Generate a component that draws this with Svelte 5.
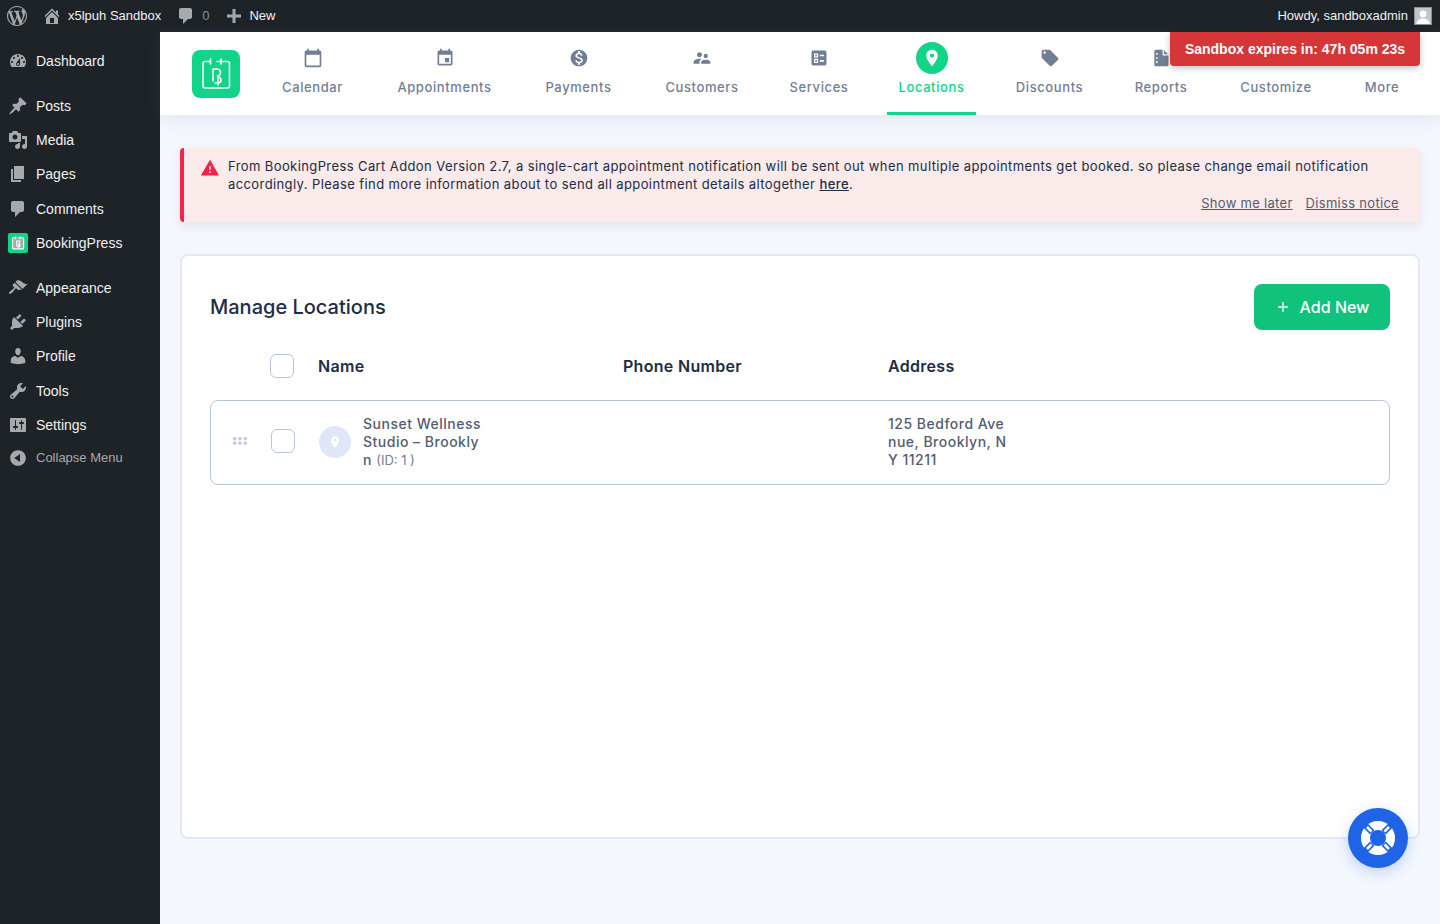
<script>
	const sidebar = [
		{ label: 'Dashboard', d: 'M3.76 16h12.48c1.1-1.37 1.76-3.11 1.76-5 0-4.42-3.58-8-8-8s-8 3.58-8 8c0 1.89.66 3.63 1.76 5zM10 4c.55 0 1 .45 1 1s-.45 1-1 1-1-.45-1-1 .45-1 1-1zM6 6c.55 0 1 .45 1 1s-.45 1-1 1-1-.45-1-1 .45-1 1-1zm8 0c.55 0 1 .45 1 1s-.45 1-1 1-1-.45-1-1 .45-1 1-1zm-5.37 5.55L12 7v6c0 1.1-.9 2-2 2s-2-.9-2-2c0-.57.24-1.08.63-1.45zM4 10c.55 0 1 .45 1 1s-.45 1-1 1-1-.45-1-1 .45-1 1-1zm12 0c.55 0 1 .45 1 1s-.45 1-1 1-1-.45-1-1 .45-1 1-1zm-5 3c0-.55-.45-1-1-1s-1 .45-1 1 .45 1 1 1 1-.45 1-1z', gap: true },
		{ label: 'Posts', d: 'M10.44 3.02l1.82-1.82 6.36 6.35-1.83 1.82c-1.05-.68-2.48-.57-3.41.36l-.75.75c-.92.93-1.04 2.35-.35 3.41l-1.83 1.82-2.41-2.41-2.8 2.79c-.42.42-3.38 2.71-3.8 2.29s1.86-3.39 2.28-3.81l2.79-2.79L4.1 9.36l1.83-1.82c1.05.69 2.48.57 3.4-.36l.75-.75c.93-.92 1.05-2.35.36-3.41z' },
		{ label: 'Media', d: 'M13 11V4c0-.55-.45-1-1-1h-1.67L9 1H5L3.67 3H2c-.55 0-1 .45-1 1v7c0 .55.45 1 1 1h10c.55 0 1-.45 1-1zM7 4.5c1.38 0 2.5 1.12 2.5 2.5S8.38 9.5 7 9.5 4.5 8.38 4.5 7 5.62 4.5 7 4.5zM14 6h5v10.5c0 1.38-1.12 2.5-2.5 2.5S14 17.88 14 16.5s1.12-2.5 2.5-2.5c.17 0 .34.02.5.05V9h-3V6zm-4 8.05V13h2v3.5c0 1.38-1.12 2.5-2.5 2.5S7 17.88 7 16.5 8.12 14 9.5 14c.17 0 .34.02.5.05z' },
		{ label: 'Pages', d: 'M6 15V2h10v13H6zm-1 1h8v2H3V5h2v11z' },
		{ label: 'Comments', d: 'M5 2h9c1.1 0 2 .9 2 2v7c0 1.1-.9 2-2 2h-2l-5 5v-5H5c-1.1 0-2-.9-2-2V4c0-1.1.9-2 2-2z' },
		{ label: 'BookingPress', logo: true, gap: true },
		{ label: 'Appearance', d: 'M14.48 11.06L7.41 3.99l1.5-1.5c.5-.56 2.3-.47 3.51.32 1.21.8 1.43 1.28 2.91 2.1 1.18.64 2.45 1.26 4.45.85zm-.71.71L6.7 4.7 4.93 6.47c-.39.39-.39 1.02 0 1.41l1.06 1.06c.39.39.39 1.03 0 1.42-.6.6-1.43 1.11-2.21 1.69-.35.26-.7.53-1.01.84C1.43 13.23.4 14.85 1.15 15.6c.75.75 2.37-.29 3.68-1.6.31-.31.58-.66.84-1.01.58-.78 1.09-1.61 1.69-2.21.39-.39 1.02-.39 1.41 0l1.06 1.06c.39.39 1.02.39 1.41 0z' },
		{ label: 'Plugins', d: 'M13.11 4.36L9.87 7.6 8 5.73l3.24-3.24c.35-.34 1.05-.2 1.56.32.52.51.66 1.21.31 1.55zm-8 1.77l.91-1.12 9.01 9.01-1.19.84c-.71.71-2.63 1.16-3.82 1.16H6.14L4.9 17.26c-.59.59-1.54.59-2.12 0-.59-.58-.59-1.53 0-2.12l1.24-1.24v-3.88c0-1.13.4-3.19 1.09-3.89zm7.26 3.97l3.24-3.24c.34-.35 1.04-.21 1.55.31.52.51.66 1.21.31 1.55l-3.24 3.25z' },
		{ label: 'Profile', d: 'M10 9.25c-2.27 0-2.73-3.44-2.73-3.44C7 4.02 7.82 2 9.97 2c2.16 0 2.98 2.02 2.71 3.81 0 0-.41 3.44-2.68 3.44zm0 2.57L12.72 10c2.39 0 4.52 2.33 4.52 4.53v2.49s-3.65 1.13-7.24 1.13c-3.65 0-7.24-1.13-7.24-1.13v-2.49c0-2.25 1.94-4.48 4.47-4.48z' },
		{ label: 'Tools', d: 'M16.68 9.77c-1.34 1.34-3.3 1.67-4.95.99l-5.41 6.52c-.99.99-2.59.99-3.58 0s-.99-2.59 0-3.57l6.52-5.42c-.68-1.65-.35-3.61.99-4.95 1.28-1.28 3.12-1.62 4.72-1.06l-2.89 2.89 2.82 2.82 2.86-2.87c.53 1.58.18 3.39-1.08 4.65zM3.81 16.21c.4.39 1.04.39 1.43 0 .4-.4.4-1.04 0-1.43-.39-.4-1.03-.4-1.43 0-.39.39-.39 1.03 0 1.43z' },
		{ label: 'Settings', d: 'M18 16V4c0-.55-.45-1-1-1H3c-.55 0-1 .45-1 1v12c0 .55.45 1 1 1h14c.55 0 1-.45 1-1zM8 11h1c.55 0 1 .45 1 1s-.45 1-1 1H8v1.5c0 .28-.22.5-.5.5s-.5-.22-.5-.5V13H6c-.55 0-1-.45-1-1s.45-1 1-1h1V5.5c0-.28.22-.5.5-.5s.5.22.5.5V11zm5-2h-1c-.55 0-1-.45-1-1s.45-1 1-1h1V5.5c0-.28.22-.5.5-.5s.5.22.5.5V7h1c.55 0 1 .45 1 1s-.45 1-1 1h-1v5.5c0 .28-.22.5-.5.5s-.5-.22-.5-.5V9z' }
	];

	const pin = 'M12 2C8.13 2 5 5.13 5 9c0 5.25 7 13 7 13s7-7.75 7-13c0-3.87-3.13-7-7-7zm0 9.5c-1.38 0-2.5-1.12-2.5-2.5s1.12-2.5 2.5-2.5 2.5 1.12 2.5 2.5-1.12 2.5-2.5 2.5z';

	const nav = [
		{ label: 'Calendar', w: 87, d: 'M20 3h-1V1h-2v2H7V1H5v2H4c-1.1 0-2 .9-2 2v16c0 1.1.9 2 2 2h16c1.1 0 2-.9 2-2V5c0-1.1-.9-2-2-2zm0 18H4V8h16v13z' },
		{ label: 'Appointments', w: 119, d: 'M17 12h-5v5h5v-5zM16 1v2H8V1H6v2H5c-1.11 0-1.99.9-1.99 2L3 19c0 1.1.89 2 2 2h14c1.1 0 2-.9 2-2V5c0-1.1-.9-2-2-2h-1V1h-2zm3 18H5V8h14v11z' },
		{ label: 'Payments', w: 91, d: 'M12 2C6.48 2 2 6.48 2 12s4.48 10 10 10 10-4.48 10-10S17.52 2 12 2zm1.41 16.09V20h-2.67v-1.93c-1.71-.36-3.16-1.46-3.27-3.4h1.96c.1 1.05.82 1.87 2.65 1.87 1.96 0 2.4-.98 2.4-1.59 0-.83-.44-1.61-2.67-2.14-2.48-.6-4.18-1.62-4.18-3.67 0-1.72 1.39-2.84 3.11-3.21V4h2.67v1.95c1.86.45 2.79 1.86 2.85 3.39H14.3c-.05-1.11-.64-1.87-2.22-1.87-1.5 0-2.4.68-2.4 1.64 0 .84.65 1.39 2.67 1.91s4.18 1.39 4.18 3.91c-.01 1.83-1.38 2.83-3.12 3.16z' },
		{ label: 'Customers', w: 98, d: 'M16.5 12c1.38 0 2.49-1.12 2.49-2.5S17.88 7 16.5 7C15.12 7 14 8.12 14 9.5s1.12 2.5 2.5 2.5zM9 11c1.66 0 2.99-1.34 2.99-3S10.66 5 9 5C7.34 5 6 6.34 6 8s1.34 3 3 3zm7.5 3c-1.83 0-5.5.92-5.5 2.75V19h11v-2.25c0-1.83-3.67-2.75-5.5-2.75zM9 13c-2.33 0-7 1.17-7 3.5V19h7v-2.25c0-.85.33-2.34 2.37-3.47C10.5 13.1 9.66 13 9 13z' },
		{ label: 'Services', w: 78, d: 'M5 3h14a2 2 0 0 1 2 2v14a2 2 0 0 1-2 2H5a2 2 0 0 1-2-2V5a2 2 0 0 1 2-2zM6 6.500h5v5H6zM7.500 8v2h2V8zM6 13h5v5H6zM7.500 14.500v2h2v-2zM13 8h5v2h-5zM13 14.500h5v2h-5z', evenodd: true },
		{ label: 'Locations', w: 89, d: pin, active: true },
		{ label: 'Discounts', w: 89, d: 'M21.41 11.58l-9-9C12.05 2.22 11.55 2 11 2H4c-1.1 0-2 .9-2 2v7c0 .55.22 1.05.59 1.42l9 9c.36.36.86.58 1.41.58.55 0 1.05-.22 1.41-.59l7-7c.37-.36.59-.86.59-1.41 0-.55-.23-1.06-.59-1.42zM5.5 7C4.67 7 4 6.33 4 5.5S4.67 4 5.5 4 7 4.67 7 5.5 6.33 7 5.5 7z' },
		{ label: 'Reports', w: 76, d: 'M6 2h8v7h7v11c0 1.1-.9 2-2 2H6c-1.1 0-2-.9-2-2V4c0-1.1.9-2 2-2zm0 4v2h2V6H6zm0 5v2h2v-2H6zm0 5v2h2v-2H6zM15.500 2.500l5 5h-5z', evenodd: true },
		{ label: 'Customize', w: 96 },
		{ label: 'More', w: 58 }
	];
</script>

{#snippet bpLogo(size)}
	<svg class="bp-logo" width={size} height={size} viewBox="0 0 48 48" fill="none" stroke="#fff" stroke-width={size < 30 ? 2.6 : 1.6} stroke-linecap="round">
		<path d="M18.500 11.500H13a2 2 0 0 0-2 2V36a2 2 0 0 0 2 2h22.500a2 2 0 0 0 2-2V13.500a2 2 0 0 0-2-2H25" />
		<path d="M18.500 9v5M29 9v5" />
		<path d="M21 31V19h3.500a3.500 3.500 0 0 1 1 7" />
		<path d="M26 35v-8a3 3 0 1 1 0 6h-3" />
	</svg>
{/snippet}

<div class="adminbar">
	<div class="bar-left">
		<svg class="wp" width="20" height="20" viewBox="0 0 20 20"><path d="M20 10c0-5.51-4.49-10-10-10C4.48 0 0 4.49 0 10c0 5.52 4.48 10 10 10 5.51 0 10-4.48 10-10zM7.78 15.37L4.37 6.22c.55-.02 1.17-.08 1.17-.08.5-.06.44-1.13-.06-1.11 0 0-1.45.11-2.37.11-.18 0-.37 0-.58-.01C4.12 2.69 6.87 1.11 10 1.11c2.33 0 4.45.87 6.05 2.34-.68-.11-1.65.39-1.65 1.58 0 .74.45 1.36.9 2.1.35.61.55 1.36.55 2.46 0 1.49-1.4 5-1.4 5l-3.03-8.37c.54-.02.82-.17.82-.17.5-.05.44-1.25-.06-1.22 0 0-1.44.12-2.38.12-.87 0-2.33-.12-2.33-.12-.5-.03-.56 1.2-.06 1.22l.92.08 1.26 3.41zM17.41 10c.24-.64.74-1.87.43-4.25.7 1.29 1.05 2.71 1.05 4.25 0 3.29-1.73 6.24-4.4 7.78.97-2.59 1.94-5.2 2.92-7.78zM6.1 18.09C3.12 16.65 1.11 13.53 1.11 10c0-1.3.23-2.48.72-3.59C3.25 10.3 4.67 14.2 6.1 18.09zm4.03-6.63l2.58 6.98c-.86.29-1.76.45-2.71.45-.79 0-1.57-.11-2.29-.33.81-2.38 1.62-4.74 2.42-7.1z" /></svg>
		<span class="bar-item home">
			<svg width="20" height="20" viewBox="0 0 20 20"><path d="M16 8.5l1.53 1.53-1.06 1.06L10 4.62l-6.47 6.47-1.06-1.06L10 2.5l4 4v-2h2v4zm-6-2.46l6 5.99V18H4v-5.97zM12 17v-5H8v5h4z" /></svg>
			x5lpuh Sandbox
		</span>
		<span class="bar-item comments">
			<svg width="20" height="20" viewBox="0 0 20 20"><path d="M5 2h9c1.1 0 2 .9 2 2v7c0 1.1-.9 2-2 2h-2l-5 5v-5H5c-1.1 0-2-.9-2-2V4c0-1.1.9-2 2-2z" /></svg>
			<span class="count">0</span>
		</span>
		<span class="bar-item new">
			<svg width="20" height="20" viewBox="0 0 20 20"><path d="M17 8.500v3h-5.500V17h-3v-5.500H3v-3h5.500V3h3v5.500z" /></svg>
			New
		</span>
	</div>
	<div class="howdy">
		Howdy, sandboxadmin
		<span class="avatar">
			<svg width="16" height="16" viewBox="0 0 16 16"><circle cx="8" cy="6" r="3.400" fill="#fff" /><path d="M1.500 16c0-4 3-5.500 6.500-5.500s6.500 1.500 6.500 5.500z" fill="#fff" /></svg>
		</span>
	</div>
</div>

<div class="layout">
	<aside class="sidebar">
		<ul>
			{#each sidebar as item}
				<li class:gap={item.gap}>
					{#if item.logo}
						<span class="menu-logo">{@render bpLogo(20)}</span>
					{:else}
						<svg width="20" height="20" viewBox="0 0 20 20"><path d={item.d} /></svg>
					{/if}
					<span>{item.label}</span>
				</li>
			{/each}
			<li class="collapse">
				<svg width="20" height="20" viewBox="0 0 20 20"><path d="M10 2.160c4.330 0 7.840 3.510 7.840 7.840s-3.510 7.840-7.840 7.840S2.160 14.330 2.160 10 5.710 2.160 10 2.160zm2 11.720V6.120L6.180 9.970z" /></svg>
				<span>Collapse Menu</span>
			</li>
		</ul>
	</aside>

	<main class="content">
		<header class="topnav">
			<div class="app-logo">{@render bpLogo(48)}</div>
			<nav class="tabs">
				{#each nav as tab}
					<div class="tab" class:active={tab.active} style="width:{tab.w}px">
						<span class="tab-icon">
							{#if tab.d}
								<svg width="20" height="20" viewBox="0 0 24 24"><path d={tab.d} fill-rule={tab.evenodd ? 'evenodd' : 'nonzero'} /></svg>
							{/if}
						</span>
						<span class="tab-label">{tab.label}</span>
					</div>
				{/each}
			</nav>
		</header>

		<div class="sandbox-badge">Sandbox expires in: 47h 05m 23s</div>

		<div class="page">
			<div class="notice">
				<svg class="notice-icon" width="20" height="20" viewBox="0 0 24 24"><path d="M1 21h22L12 2 1 21zm12-3h-2v-2h2v2zm0-4h-2v-4h2v4z" /></svg>
				<div class="notice-body">
					<p>From BookingPress Cart Addon Version 2.7, a single-cart appointment notification will be sent out when multiple appointments get booked. so please change email notification accordingly. Please find more information about to send all appointment details altogether <a href="#here">here</a>.</p>
					<div class="notice-actions">
						<a href="#later">Show me later</a>
						<a href="#dismiss">Dismiss notice</a>
					</div>
				</div>
			</div>

			<section class="panel">
				<div class="panel-head">
					<h1>Manage Locations</h1>
					<button class="add-btn">
						<svg width="12" height="12" viewBox="0 0 12 12"><path d="M6 1v10M1 6h10" stroke="#fff" stroke-width="1.400" fill="none" /></svg>
						Add New
					</button>
				</div>

				<div class="table-head">
					<span class="checkbox head-check"></span>
					<span class="col-name">Name</span>
					<span class="col-phone">Phone Number</span>
					<span class="col-address">Address</span>
				</div>

				<div class="row">
					<svg class="drag" width="14" height="8" viewBox="0 0 14 8"><g fill="#c3cbe0"><rect x="0" y="0" width="3.500" height="3.400" rx="1.400" /><rect x="5.200" y="0" width="3.500" height="3.400" rx="1.400" /><rect x="10.500" y="0" width="3.500" height="3.400" rx="1.400" /><rect x="0" y="4.600" width="3.500" height="3.400" rx="1.400" /><rect x="5.200" y="4.600" width="3.500" height="3.400" rx="1.400" /><rect x="10.500" y="4.600" width="3.500" height="3.400" rx="1.400" /></g></svg>
					<span class="checkbox"></span>
					<span class="loc-avatar">
						<svg width="14" height="14" viewBox="0 0 24 24"><path d={pin} /></svg>
					</span>
					<div class="loc-name">Sunset Wellness Studio – Brooklyn <small>(ID: 1 )</small></div>
					<div class="loc-address">125 Bedford Avenue, Brooklyn, NY 11211</div>
				</div>
			</section>
		</div>
	</main>
</div>

<button class="help" aria-label="Help">
	<svg width="36" height="36" viewBox="0 0 36 36">
		<circle cx="18" cy="18" r="12.500" fill="none" stroke="#fff" stroke-width="9" />
		<path d="M5.600 5.600l6.700 6.700M30.400 5.600l-6.700 6.700M5.600 30.400l6.700-6.700M30.400 30.400l-6.700-6.700" stroke="#1f63e6" stroke-width="6" />
		<path d="M7 7l4.500 4.500M29 7l-4.500 4.500M7 29l4.500-4.500M29 29l-4.500-4.500" stroke="#fff" stroke-width="2.600" />
	</svg>
</button>

<style>
	:global(body) {
		background: #f4f7fc;
		font-family: 'Inter', 'Open Sans', sans-serif;
	}

	.adminbar {
		height: 32px;
		background: #1d2327;
		color: #f0f0f1;
		font: 13px/32px 'Liberation Sans', Arial, sans-serif;
		display: flex;
		justify-content: space-between;
		padding: 0 8px 0 7px;
	}

	.adminbar svg {
		fill: #a7aaad;
	}

	.bar-left {
		display: flex;
		align-items: center;
	}

	.bar-item {
		display: flex;
		align-items: center;
		gap: 6px;
	}

	.home {
		margin-left: 15px;
	}

	.comments {
		margin-left: 15px;
	}

	.count {
		color: #8c8f94;
	}

	.new {
		margin-left: 15px;
		gap: 5px;
	}

	.howdy {
		display: flex;
		align-items: center;
		gap: 6px;
	}

	.avatar {
		width: 16px;
		height: 16px;
		background: #c3c4c7;
		border: 1px solid #8c8f94;
		display: block;
		overflow: hidden;
	}

	.avatar svg {
		display: block;
	}

	.layout {
		display: flex;
		min-height: 892px;
	}

	.sidebar {
		width: 160px;
		flex: none;
		background: #1d2327;
		color: #f0f0f1;
		font: 14px/18px 'Liberation Sans', Arial, sans-serif;
	}

	.sidebar ul {
		list-style: none;
		margin: 0;
		padding: 11.600px 0 0;
	}

	.sidebar li {
		display: flex;
		align-items: center;
		height: 34.300px;
		padding-left: 8px;
		gap: 8px;
	}

	.sidebar li.gap {
		margin-bottom: 10.600px;
	}

	.sidebar li svg {
		fill: #a7aaad;
	}

	.menu-logo {
		width: 20px;
		height: 20px;
		background: #12d488;
		border-radius: 2px;
		display: block;
	}

	.menu-logo :global(svg) {
		display: block;
	}

	.sidebar li.collapse {
		color: #a7aaad;
		font-size: 13px;
		position: relative;
		top: -1px;
	}

	.content {
		flex: 1;
		position: relative;
		min-width: 0;
	}

	.topnav {
		height: 83px;
		background: #fff;
		box-shadow: 0 4px 16px rgba(122, 136, 168, 0.14);
		display: flex;
		padding-left: 32px;
	}

	.app-logo {
		width: 48px;
		height: 48px;
		margin-top: 18px;
		background: #12d488;
		border-radius: 8px;
		flex: none;
	}

	.tabs {
		display: flex;
		gap: 29px;
		margin-left: 29px;
	}

	.tab {
		display: flex;
		flex-direction: column;
		align-items: center;
		color: #727e95;
		border-bottom: 3px solid transparent;
		box-sizing: border-box;
		height: 83px;
		padding-top: 10px;
		flex: none;
	}

	.tab-icon {
		width: 32px;
		height: 32px;
		border-radius: 50%;
		display: flex;
		align-items: center;
		justify-content: center;
		margin-bottom: 3px;
	}

	.tab-icon svg {
		fill: #727e95;
	}

	.tab-label {
		font-size: 13px;
		line-height: 20px;
		font-weight: 500;
		white-space: nowrap;
		letter-spacing: 0.6px;
	}

	.tab.active {
		color: #12d488;
		border-bottom-color: #12d488;
	}

	.tab.active .tab-icon {
		background: #12d488;
	}

	.tab.active .tab-icon svg {
		fill: #fff;
	}

	.sandbox-badge {
		position: absolute;
		top: 0;
		right: 20px;
		width: 250px;
		height: 34px;
		box-sizing: border-box;
		background: #d63638;
		color: #fff;
		font: 700 14px/34px 'Liberation Sans', Arial, sans-serif;
		text-align: center;
		border-radius: 0 0 4px 4px;
		box-shadow: 0 2px 6px rgba(0, 0, 0, 0.25);
	}

	.page {
		padding: 33px 20px 0;
	}

	.notice {
		display: flex;
		gap: 8px;
		background: #faeaea;
		border-left: 4px solid #f5224b;
		border-radius: 4px;
		box-shadow: 0 4px 10px rgba(122, 136, 168, 0.16);
		padding: 9px 21px 10px 16px;
		height: 74px;
		box-sizing: border-box;
	}

	.notice-icon {
		fill: #f5224b;
		flex: none;
		margin-top: 1px;
	}

	.notice-body {
		flex: 1;
		font-size: 13px;
		line-height: 18px;
		color: #202c45;
		letter-spacing: 0.4px;
	}

	.notice-body p {
		margin: 0;
	}

	.notice-body a {
		color: #202c45;
		font-weight: 500;
	}

	.notice-actions {
		display: flex;
		justify-content: flex-end;
		gap: 13px;
		margin-top: 1px;
		font-size: 13px;
		letter-spacing: 0.3px;
	}

	.notice-actions a {
		color: #535d71;
		font-weight: 400;
	}

	.panel {
		margin-top: 32px;
		height: 585px;
		box-sizing: border-box;
		background: #fff;
		border: 2px solid #e2e8f6;
		border-radius: 8px;
		padding: 28px 28px 0;
	}

	.panel-head {
		display: flex;
		justify-content: space-between;
		align-items: center;
		height: 46px;
	}

	h1 {
		margin: 0;
		font-size: 20px;
		font-weight: 500;
		color: #202c45;
	}

	.add-btn {
		width: 136px;
		height: 46px;
		padding: 0 0 0 2px;
		background: #10c27c;
		border: 0;
		border-radius: 8px;
		color: #fff;
		font: 500 16px 'Inter', sans-serif;
		display: flex;
		align-items: center;
		justify-content: center;
		gap: 11px;
	}

	.table-head {
		display: grid;
		grid-template-columns: 60px 48px 305px 265px 1fr;
		align-items: center;
		height: 24px;
		margin-top: 24px;
		font-size: 16px;
		font-weight: 600;
		color: #202c45;
		letter-spacing: 0.3px;
	}

	.head-check {
		grid-column: 2;
	}

	.checkbox {
		width: 22px;
		height: 22px;
		border: 1px solid #b8c4dc;
		border-radius: 6px;
		background: #fff;
		display: block;
	}

	.row {
		margin-top: 22px;
		height: 85px;
		box-sizing: border-box;
		border: 1px solid #b8c4dc;
		border-radius: 8px;
		display: flex;
		align-items: center;
		padding-left: 22px;
		color: #535d71;
		font-size: 14px;
		line-height: 18px;
		font-weight: 500;
		letter-spacing: 0.5px;
	}

	.drag {
		flex: none;
		margin-top: -3px;
	}

	.row .checkbox {
		margin-left: 24px;
		flex: none;
		margin-top: -3px;
	}

	.loc-avatar {
		width: 32px;
		height: 32px;
		margin-left: 24px;
		margin-top: -2px;
		border-radius: 50%;
		background: #dfe6f7;
		display: flex;
		align-items: center;
		justify-content: center;
		flex: none;
	}

	.loc-avatar svg {
		fill: #fff;
	}

	.loc-name {
		width: 123px;
		margin-left: 12px;
		margin-top: -2px;
		word-break: break-all;
		flex: none;
	}

	.loc-name small {
		font-size: 13px;
		font-weight: 400;
		color: #727e95;
		letter-spacing: 0;
	}

	.loc-address {
		width: 120px;
		margin-left: 402px;
		margin-top: -2px;
		word-break: break-all;
		flex: none;
	}

	.help {
		position: fixed;
		left: 1348px;
		top: 808px;
		width: 60px;
		height: 60px;
		border: 0;
		padding: 0;
		border-radius: 50%;
		background: #1f63e6;
		box-shadow: 0 4px 14px rgba(31, 99, 230, 0.25);
		display: flex;
		align-items: center;
		justify-content: center;
	}
</style>
